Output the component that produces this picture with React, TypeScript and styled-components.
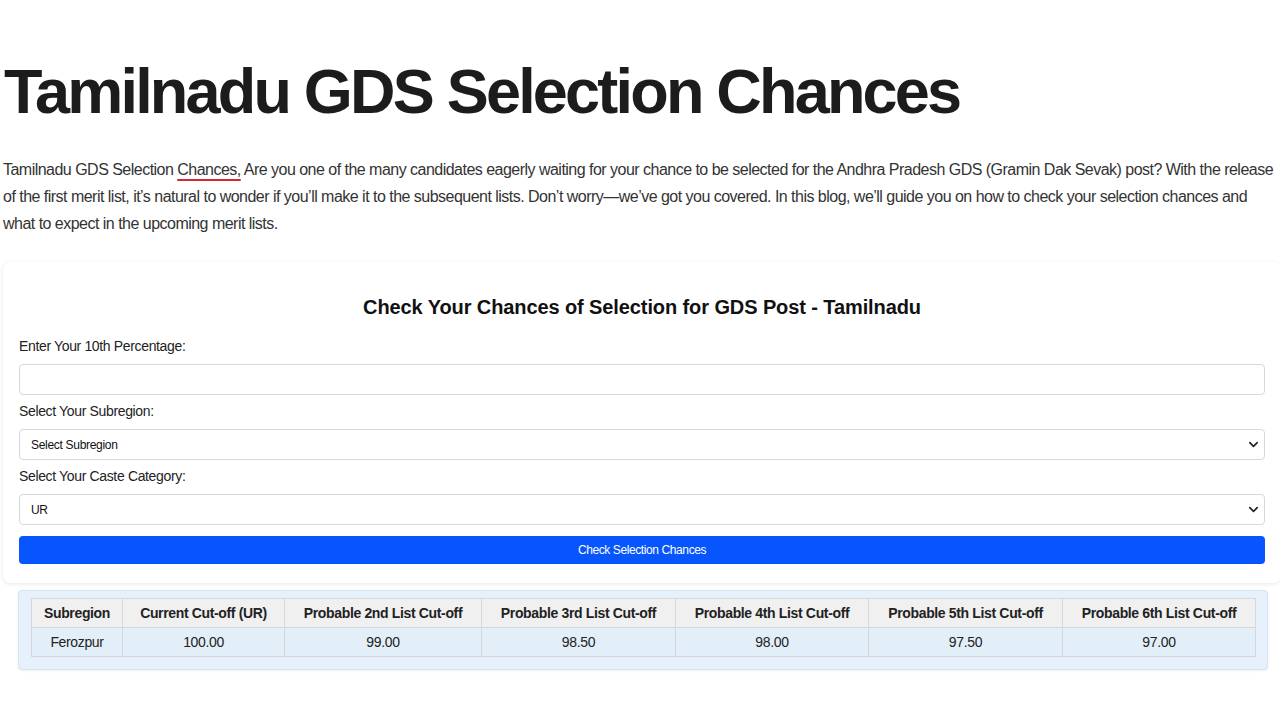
import React from 'react'
import styled, { createGlobalStyle } from 'styled-components'

const GlobalStyle = createGlobalStyle`
  html, body {
    margin: 0;
    padding: 0;
    background: #ffffff;
    font-family: "Liberation Sans", Arial, sans-serif;
  }
`

const Page = styled.div`
  padding: 0 0 40px 3px;
  width: 1280px;
  box-sizing: border-box;
  overflow: hidden;
`

const Title = styled.h1`
  margin: 53px 0 0 1px;
  font-size: 63px;
  line-height: 76px;
  font-weight: 700;
  letter-spacing: -2.8px;
  color: #1c1c1c;
`

const Intro = styled.p`
  margin: 27px 0 0;
  font-size: 16px;
  line-height: 27px;
  letter-spacing: -0.52px;
  color: #333333;

  a {
    color: #333333;
    text-decoration: underline;
    text-decoration-color: #d9262c;
    text-decoration-thickness: 2px;
    text-underline-offset: 4px;
  }
`

const Card = styled.section`
  margin: 25px -1px 0 0;
  padding: 16px 16px 19px;
  background: #ffffff;
  border-radius: 8px;
  box-shadow: 0 1px 4px rgba(0, 0, 0, 0.1);
`

const CardTitle = styled.h3`
  margin: 18px 0 19px;
  text-align: center;
  font-size: 20px;
  line-height: 23px;
  font-weight: 700;
  letter-spacing: -0.1px;
  color: #111111;
`

const Label = styled.label`
  display: block;
  margin-bottom: 10px;
  font-size: 14px;
  line-height: 16px;
  letter-spacing: -0.35px;
  color: #222222;
`

const Field = styled.div`
  position: relative;
  margin-bottom: 8px;
`

const TextInput = styled.input`
  display: block;
  width: 100%;
  height: 31px;
  box-sizing: border-box;
  border: 1px solid #d8d8d8;
  border-radius: 4px;
  background: #ffffff;
  outline: none;
`

const Select = styled.select`
  display: block;
  width: 100%;
  height: 31px;
  box-sizing: border-box;
  padding: 0 30px 0 11px;
  border: 1px solid #d8d8d8;
  border-radius: 4px;
  background: #ffffff;
  appearance: none;
  font-family: "Liberation Sans", Arial, sans-serif;
  font-size: 12px;
  letter-spacing: -0.3px;
  color: #111111;
`

const Chevron = styled.svg`
  position: absolute;
  right: 6px;
  top: 10px;
  width: 11px;
  height: 11px;
  pointer-events: none;
`

const Button = styled.button`
  display: block;
  width: 100%;
  height: 28px;
  margin-top: 11px;
  border: none;
  border-radius: 4px;
  background: #0655fd;
  color: #ffffff;
  font-family: "Liberation Sans", Arial, sans-serif;
  font-size: 12px;
  letter-spacing: -0.4px;
`

const Results = styled.div`
  margin: 7px 12px 0 15px;
  padding: 7px 12px 12px;
  background: #e6f1fb;
  border: 1px solid #d3e4f2;
  border-radius: 4px;
  box-shadow: 0 1px 3px rgba(0, 0, 0, 0.06);
`

const Table = styled.table`
  width: 100%;
  table-layout: fixed;
  border-collapse: collapse;
  font-size: 14px;
  letter-spacing: -0.35px;
  color: #222222;
`

const Cell = styled.td<{ $head?: boolean }>`
  height: 28px;
  padding: 0 4px;
  text-align: center;
  white-space: nowrap;
  border: 1px solid #d2d8de;
  background: ${p => (p.$head ? '#f0f0f1' : '#e2eff9')};
  font-weight: ${p => (p.$head ? 700 : 400)};
`

const columns = [
  { title: 'Subregion', value: 'Ferozpur', width: 91 },
  { title: 'Current Cut-off (UR)', value: '100.00', width: 162 },
  { title: 'Probable 2nd List Cut-off', value: '99.00', width: 197 },
  { title: 'Probable 3rd List Cut-off', value: '98.50', width: 194 },
  { title: 'Probable 4th List Cut-off', value: '98.00', width: 193 },
  { title: 'Probable 5th List Cut-off', value: '97.50', width: 194 },
  { title: 'Probable 6th List Cut-off', value: '97.00', width: 193 },
]

const ChevronIcon = () => (
  <Chevron viewBox="0 0 12 12">
    <path d="M2 4 L6 8 L10 4" fill="none" stroke="#222" strokeWidth="1.8" strokeLinecap="round" strokeLinejoin="round" />
  </Chevron>
)

const App = () => (
  <Page>
    <GlobalStyle />
    <Title>Tamilnadu GDS Selection Chances</Title>
    <Intro>
      Tamilnadu GDS Selection <a href="#">Chances,</a> Are you one of the many candidates eagerly waiting for
      your chance to be selected for the Andhra Pradesh GDS (Gramin Dak Sevak) post? With the release of the
      first merit list, it’s natural to wonder if you’ll make it to the subsequent lists. Don’t worry—we’ve got
      you covered. In this blog, we’ll guide you on how to check your selection chances and what to expect in
      the upcoming merit lists.
    </Intro>

    <Card>
      <CardTitle>Check Your Chances of Selection for GDS Post - Tamilnadu</CardTitle>

      <Label htmlFor="percentage">Enter Your 10th Percentage:</Label>
      <Field>
        <TextInput id="percentage" type="text" />
      </Field>

      <Label htmlFor="subregion">Select Your Subregion:</Label>
      <Field>
        <Select id="subregion" defaultValue="">
          <option value="">Select Subregion</option>
        </Select>
        <ChevronIcon />
      </Field>

      <Label htmlFor="caste">Select Your Caste Category:</Label>
      <Field>
        <Select id="caste" defaultValue="UR">
          <option value="UR">UR</option>
        </Select>
        <ChevronIcon />
      </Field>

      <Button type="button">Check Selection Chances</Button>
    </Card>

    <Results>
      <Table>
        <colgroup>
          {columns.map(c => (
            <col key={c.title} style={{ width: c.width }} />
          ))}
        </colgroup>
        <tbody>
          <tr>
            {columns.map(c => (
              <Cell as="th" $head key={c.title}>
                {c.title}
              </Cell>
            ))}
          </tr>
          <tr>
            {columns.map(c => (
              <Cell key={c.title}>{c.value}</Cell>
            ))}
          </tr>
        </tbody>
      </Table>
    </Results>
  </Page>
)

export default App
